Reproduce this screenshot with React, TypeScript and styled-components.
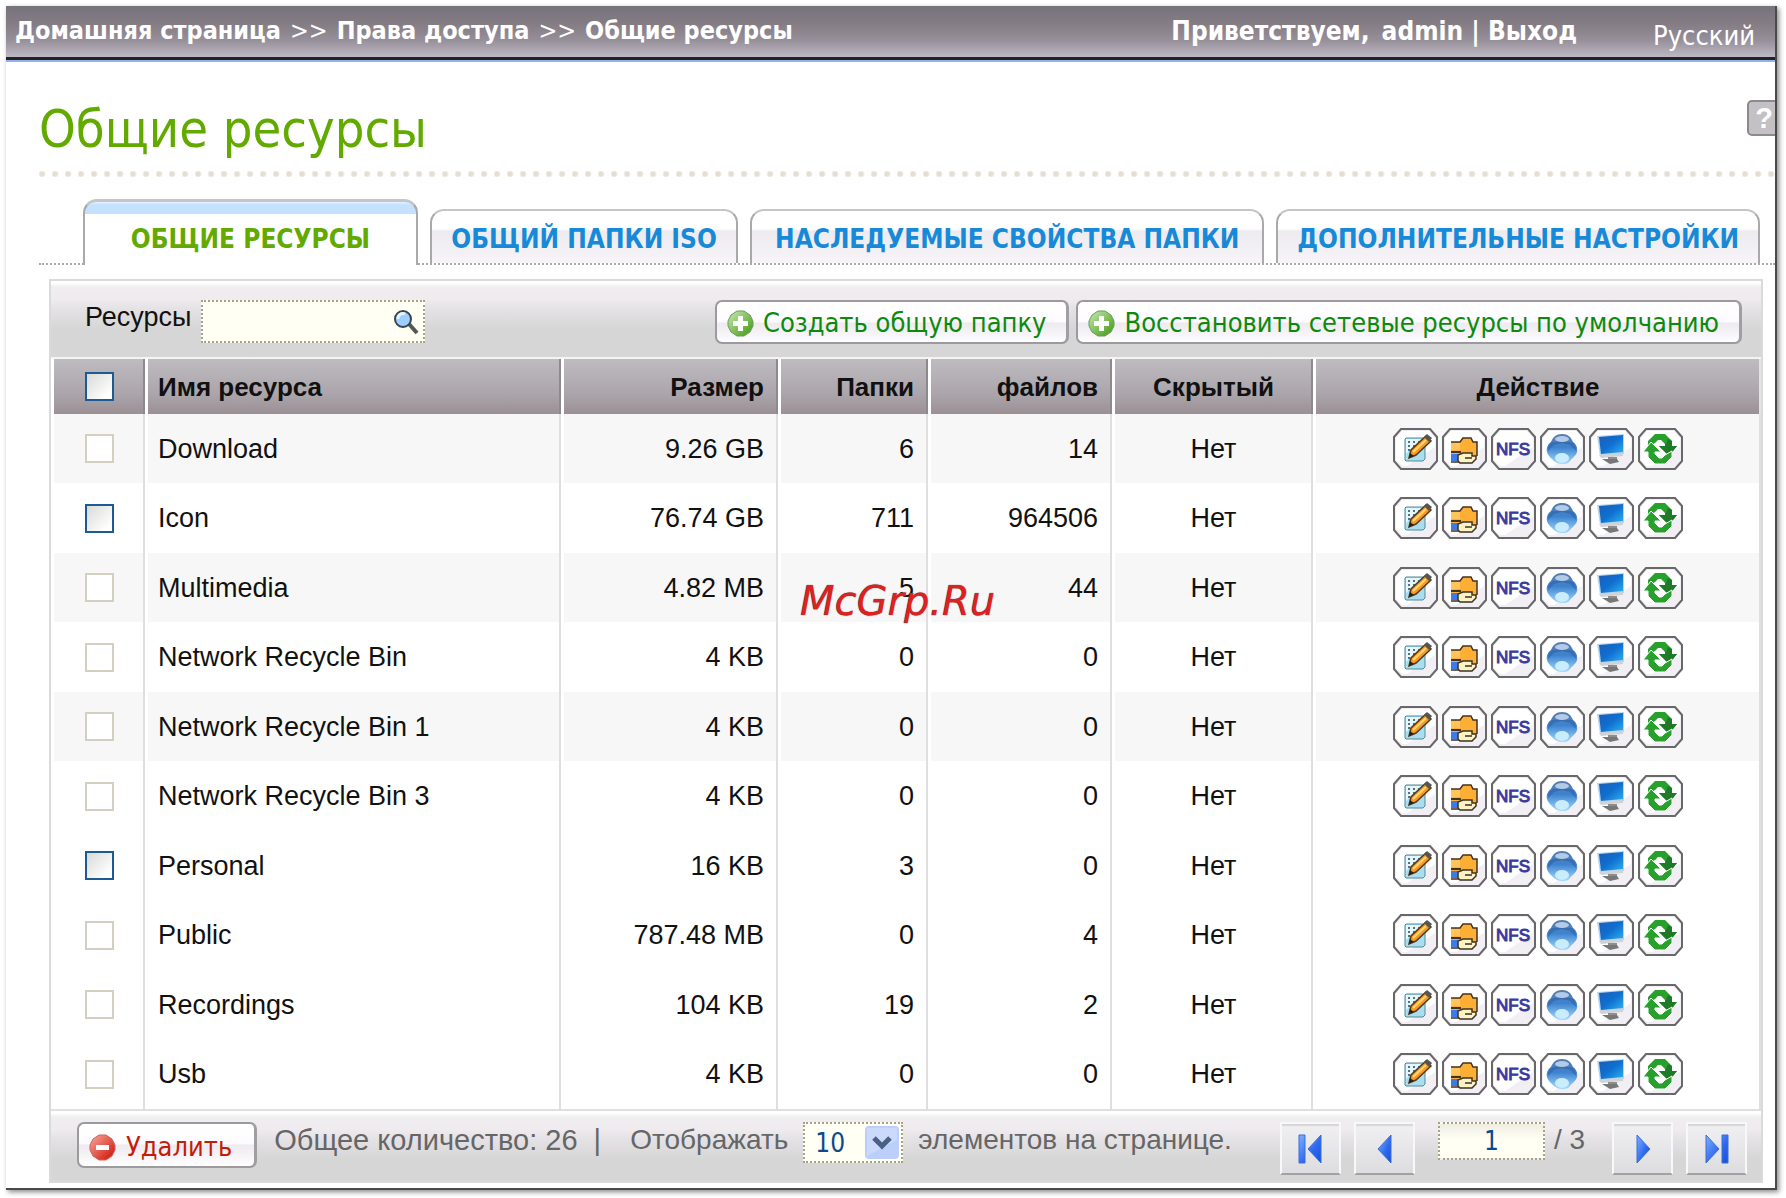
import React, { useState } from "react";
import styled, { createGlobalStyle } from "styled-components";

const ui = `"DejaVu Sans Condensed", "DejaVu Sans", sans-serif`;
const body = `"Liberation Sans", Arial, sans-serif`;

const GlobalStyle = createGlobalStyle`
  *, *::before, *::after { box-sizing: border-box; }
  body { margin: 0; background: #fff; font-family: ${body}; color: #111; }
  button, input, select { font: inherit; margin: 0; }
`;

const Page = styled.div`
  padding: 6px 9px 10px 6px;
`;

const Frame = styled.div`
  position: relative;
  overflow: hidden;
  padding-bottom: 5px;
  border-right: 2px solid #4a4a4a;
  border-bottom: 2px solid #4a4a4a;
`;

const FrameShadow = styled.div`
  box-shadow: 2px 2px 5px #888;
`;

const TopBar = styled.header`
  display: flex;
  align-items: flex-start;
  height: 56px;
  padding: 10px 20px 0 9px;
  border-bottom: 2px solid #93b2ea;
  background: linear-gradient(#77737b 0, #857c84 18px, #968f99 34px, #bdb8c3 51px, #222 51px, #222 54px);
  font: 700 25px/30px ${ui};
  color: #fff;
`;

const Crumbs = styled.nav`
  display: flex;
  gap: 9px;
  margin-right: auto;
  white-space: nowrap;
`;

const BarLink = styled.a`
  color: #fff;
  text-decoration: none;
`;

const Separator = styled.span`
  font-weight: 400;
`;

const Greeting = styled.div`
  display: flex;
  gap: 12px;
  font-size: 26px;
  white-space: pre;
`;

const Language = styled(BarLink)`
  margin-left: 76px;
  padding-top: 5px;
  font-size: 27px;
  font-weight: 400;
`;

const TitleRow = styled.div`
  display: flex;
  align-items: flex-start;
  justify-content: space-between;
  padding: 37px 0 12px 33px;
`;

const Title = styled.h1`
  margin: 0;
  font: 400 52px/60px ${ui};
  color: #62a900;
`;

const Help = styled.button`
  width: 38px;
  height: 36px;
  margin: 1px -10px 0 0;
  padding: 0 4px 0 0;
  border: 2px solid #8d8a8e;
  border-radius: 5px;
  background: #c3c1c4;
  font: 700 29px/30px ${body};
  color: #fff;
`;

const Dots = styled.div`
  height: 6px;
  margin-left: 33px;
  background: radial-gradient(circle at 3px 3px, #e5dfd3 2px, transparent 4px) 0 0 / 13px 6px repeat-x;
`;

const Tabs = styled.nav`
  display: flex;
  align-items: flex-end;
  gap: 12px;
  height: 66px;
  margin: 22px 0 14px 33px;
  padding: 0 15px 0 44px;
  border-bottom: 2px dotted #aaa;
`;

const Tab = styled.a<{ $active?: boolean; $grow: number }>`
  flex: ${(p) => p.$grow} 1 0;
  height: ${(p) => (p.$active ? 66 : 54)}px;
  margin-bottom: ${(p) => (p.$active ? -2 : 0)}px;
  padding-top: ${(p) => (p.$active ? 21 : 12)}px;
  border: 2px solid #a9a9ab;
  border-top: ${(p) => (p.$active ? 3 : 2)}px solid #c3c7c8;
  border-bottom: 0;
  border-radius: 14px 14px 0 0;
  background: ${(p) =>
    p.$active
      ? "linear-gradient(#e4f2ff 0, #c4e1ff 3px, #c4e1ff 12px, #fff 12px)"
      : "linear-gradient(#fff 0, #fff 18px, #eeebf0 20px, #f6f4f7)"};
  font: 700 26px/32px ${ui};
  color: ${(p) => (p.$active ? "#62a900" : "#168ad8")};
  text-align: center;
  text-decoration: none;
  white-space: nowrap;
`;

const Panel = styled.section`
  margin: 0 12px 0 43px;
  border: 2px solid #dadada;
`;

const panelShade = `linear-gradient(#fff 0, #fff 2px, #efeef0 6px, #efebef 18px, #e5e2e6 28px, #d6d6d6 48px)`;

const Toolbar = styled.div`
  display: flex;
  align-items: flex-start;
  gap: 7px;
  height: 76px;
  padding: 19px 19px 0 34px;
  background: ${panelShade};
`;

const SearchLabel = styled.label`
  padding-top: 1px;
  font-size: 27px;
  line-height: 32px;
`;

const SearchBox = styled.div`
  display: flex;
  align-items: center;
  width: 224px;
  height: 43px;
  margin: 0 auto 0 3px;
  padding-right: 4px;
  border: 2px dotted #a5a28c;
  background: #fffff3;
`;

const SearchInput = styled.input`
  flex: 1;
  min-width: 0;
  height: 100%;
  padding: 0 6px;
  border: 0;
  outline: 0;
  background: transparent;
  font-size: 26px;
`;

const IconButton = styled.button`
  display: block;
  padding: 0;
  border: 0;
  background: transparent;
  line-height: 0;
`;

const PushButton = styled.button<{ $danger?: boolean }>`
  display: flex;
  align-items: center;
  gap: ${(p) => (p.$danger ? 10 : 9)}px;
  height: ${(p) => (p.$danger ? 46 : 44)}px;
  padding: ${(p) => (p.$danger ? "4px 22px 0 10px" : "2px 20px 0 10px")};
  border: 2px solid #9c999f;
  border-right: 3px solid #a09da3;
  border-radius: 7px;
  background: linear-gradient(#fff 0, #fdfbff 20px, #eeeaef 21px, #f8f6f9 34px, #fff);
  font: 400 27px/34px ${ui};
  color: ${(p) => (p.$danger ? "#c31d08" : "#0c8a0c")};
  white-space: nowrap;
`;

const Table = styled.table`
  width: 100%;
  table-layout: fixed;
  border-collapse: separate;
  border-spacing: 0;
  border-top: 2px solid #f4f4f4;
`;

const Col = styled.col<{ $w?: number }>`
  width: ${(p) => (p.$w ? `${p.$w}px` : "auto")};
`;

type Align = "left" | "right" | "center";

const Th = styled.th<{ $align: Align }>`
  height: 55px;
  padding: 0 12px 0 ${(p) => (p.$align === "center" ? 13 : 10)}px;
  border-left: 3px solid #fff;
  border-right: 2px solid #8d8a8d;
  background: linear-gradient(#bebcc0 0, #b5b1b6 16px, #aca6ac 34px, #9b9094) padding-box;
  font-size: 26px;
  line-height: 32px;
  font-weight: 700;
  text-align: ${(p) => p.$align};
  &:last-child { border-right-color: #e4e4e4; }
`;

const Td = styled.td<{ $align: Align }>`
  height: 69px;
  padding: 0 12px 0 ${(p) => (p.$align === "center" ? 13 : 10)}px;
  border-left: 3px solid #fff;
  border-right: 2px solid #dfdfdf;
  background-clip: padding-box;
  font-size: 27px;
  line-height: 32px;
  text-align: ${(p) => p.$align};
`;

const Row = styled.tr<{ $shaded: boolean }>`
  background: #fff;
  ${Td} { background-color: ${(p) => (p.$shaded ? "#f7f7f7" : "#fff")}; }
  &:nth-child(even) ${Td} { height: 70px; }
`;

const Check = styled.input`
  appearance: none;
  display: block;
  width: 29px;
  height: 29px;
  margin: 0 auto;
  border: 2px solid #1c5a94;
  background: linear-gradient(135deg, #d9d9d6, #fff 85%);
  &:checked { background: #1c5a94; }
  &:disabled { border-color: #d3d0c2; background: #fff; }
`;

const Actions = styled.div`
  display: flex;
  justify-content: center;
  gap: 4px;
`;

const Footer = styled.div`
  display: flex;
  align-items: flex-start;
  height: 72px;
  padding: 11px 14px 0 26px;
  border-top: 2px solid #e0dfe1;
  background: ${panelShade};
  font-size: 28px;
  line-height: 36px;
  color: #666;
  white-space: pre;
`;

const Total = styled.span`
  margin: 0 29px 0 17px;
  font-size: 29px;
`;

const PageSize = styled.label`
  display: flex;
  gap: 15px;
`;

const SelectBox = styled.span`
  position: relative;
  display: block;
`;

const Select = styled.select`
  appearance: none;
  display: block;
  width: 100px;
  height: 41px;
  padding: 0 10px;
  border: 2px dotted #a5a28c;
  border-radius: 0;
  background: #fffff3;
  font: 400 26px/32px ${ui};
  color: #0b4a8c;
`;

const SelectArrow = styled.svg`
  position: absolute;
  top: 4px;
  right: 4px;
  pointer-events: none;
`;

const Pager = styled.div`
  display: flex;
  gap: 13px;
  margin-left: auto;
`;

const PageButton = styled.button`
  display: grid;
  place-items: center;
  width: 61px;
  height: 53px;
  padding: 0;
  border: 2px solid #f8f8f8;
  border-bottom-color: #a3a1a4;
  background: linear-gradient(#d6d4d7 0, #d6d4d7 1px, #efeef1 3px, #dddcde);
`;

const PageInput = styled.input`
  width: 107px;
  height: 38px;
  margin: 0 -4px 0 10px;
  padding: 0;
  border: 2px dotted #a5a28c;
  background: linear-gradient(#eeeee2, #fffff3 16px);
  font: 400 26px/32px ${ui};
  color: #0b4a8c;
  text-align: center;
`;

const PageCount = styled.span`
  width: 45px;
`;

const Watermark = styled.div`
  position: absolute;
  left: 794px;
  top: 570px;
  font: italic 400 40px/50px "DejaVu Sans", sans-serif;
  color: #e02020;
  text-shadow: 0 0 1px #333;
  pointer-events: none;
`;

const Magnifier = () => (
  <svg width="26" height="26" viewBox="0 0 26 26" aria-hidden="true">
    <path d="M16 15 24 24" stroke="#555" strokeWidth="4" />
    <circle cx="10" cy="10" r="8" fill="#9ccfff" stroke="#39444c" strokeWidth="2" />
    <path d="M5 10a5 5 0 0 1 7-5" stroke="#e3f4ff" strokeWidth="3" fill="none" />
  </svg>
);

const Badge = ({ danger }: { danger?: boolean }) => {
  const id = danger ? "badge-red" : "badge-green";
  return (
    <svg width="27" height="27" viewBox="0 0 27 27" aria-hidden="true">
      <defs>
        <linearGradient id={id} x2="1" y2="1">
          <stop offset="0.1" stopColor={danger ? "#f59a8e" : "#b9e3a0"} />
          <stop offset="0.8" stopColor={danger ? "#d92a1e" : "#5aa82f"} />
        </linearGradient>
      </defs>
      <path d="M10 1h7l6 4 3 6v5l-3 6-6 4h-7l-6-4-3-6v-5l3-6z" fill={`url(#${id})`} stroke={danger ? "#c9665c" : "#6f9b5c"} />
      <path d={danger ? "M7 11h13v5H7z" : "M11 6h5v5h5v5h-5v5h-5v-5H6v-5h5z"} fill="#fff" />
    </svg>
  );
};

type Kind = "edit" | "folder" | "nfs" | "web" | "host" | "refresh";

const glyphs: Record<Kind, React.ReactNode> = {
  edit: (
    <>
      <path d="M13 10h19v21l-2 2H13l-1-1V11z" fill="#a9def1" stroke="#51899c" />
      <path d="M13 11h15l-15 15z" fill="#e6f6fb" />
      <path d="M15 14h2m3 0h2m3 0h2M15 18h2m3 0h2M15 22h2" stroke="#4e7484" strokeWidth="2" />
      <path d="m16 30 2-8L33 8l5 5-15 14z" fill="#f89b1f" stroke="#5b3a16" strokeWidth="1.5" />
      <path d="M20 24 33 12" stroke="#ffd779" strokeWidth="2" />
      <path d="m31 9 3-3 5 4-3 4z" fill="#555" />
      <path d="m16 30 1-5 4 3z" fill="#222" />
    </>
  ),
  folder: (
    <>
      <path d="M9 14h9l3-4h8l2 4h4v14l-5 4H9z" fill="#fdae35" />
      <path d="M9 14h9l3-4h8l2 4h4v14" fill="none" stroke="#453220" strokeWidth="1.5" />
      <path d="M9 15h9v7H9z" fill="#ffc55a" />
      <path d="M9 24h10" stroke="#453220" strokeWidth="2" />
      <path d="M9 26h7v7H9z" fill="#3d7ce6" />
      <path d="M16 27l5-2h9v3h4v3l-4 4H18l-2-2z" fill="#fff3c4" stroke="#3b3325" strokeWidth="1.5" />
      <path d="M23 30h7M9 34h8" stroke="#3b3325" strokeWidth="1.5" />
    </>
  ),
  nfs: (
    <text x="22" y="27" textAnchor="middle" fontFamily={'"Liberation Sans", sans-serif'} fontSize="17" fontWeight="400" fill="#3d3a9e" stroke="#3d3a9e">
      NFS
    </text>
  ),
  web: (
    <>
      <defs>
        <linearGradient id="globe" x2="0" y2="1">
          <stop offset="0" stopColor="#5a7ba8" />
          <stop offset="0.45" stopColor="#3d83cf" />
          <stop offset="1" stopColor="#a6dcfd" />
        </linearGradient>
      </defs>
      <path d="M22 6c6 0 9 3 11 8 3 2 5 6 4 10s-5 6-7 9-5 3-8 3-6-1-8-3-6-5-7-9 1-8 4-10c2-5 5-8 11-8z" fill="url(#globe)" />
      <path d="M12 14c-3 2-4 5-4 9l6-6 8-2 8 2 6 6c0-4-1-7-4-9z" fill="#2f62a6" opacity="0.6" />
      <ellipse cx="22" cy="11" rx="7" ry="3" fill="#b3cbe6" />
      <ellipse cx="22" cy="30" rx="7" ry="5" fill="#c9ecff" />
    </>
  ),
  host: (
    <>
      <defs>
        <linearGradient id="screen" x2="1" y2="1">
          <stop offset="0" stopColor="#1c5db8" />
          <stop offset="0.5" stopColor="#0f6fd0" />
          <stop offset="1" stopColor="#2eb0ee" />
        </linearGradient>
      </defs>
      <path d="m8 8 27-2v20l-24 2z" fill="#b9d3ea" />
      <path d="m10 9 24-2v17l-22 2z" fill="url(#screen)" />
      <path d="m10 27 24-2v3l-22 2z" fill="#cfd2d6" />
      <path d="M19 29h9v3h-9z" fill="#8d8d8d" />
      <path d="M13 31h15l2 3-9 2z" fill="#777" />
    </>
  ),
  refresh: (
    <>
      <path d="M10 19v-6l7-7h10l7 7v5h5l-8 10-10-10h6v-2l-4-4h-3l-3 3z" fill="#27a02c" />
      <path d="M30 11l4 2v5h5l-8 10-10-10h6z" fill="#1f7a28" />
      <path d="M10 19v-6l7-7h10l7 7v5h5l-8 10-10-10h6v-2l-4-4h-3l-3 3z" fill="#27a02c" stroke="#fff" transform="rotate(180 22 21)" />
    </>
  ),
};

const actions: [Kind, string][] = [
  ["edit", "Изменить"],
  ["folder", "Права доступа"],
  ["nfs", "NFS"],
  ["web", "WebDAV"],
  ["host", "Хост"],
  ["refresh", "Обновить"],
];

const ActionIcon = ({ kind }: { kind: Kind }) => (
  <svg width="45" height="42" viewBox="0 0 45 42" aria-hidden="true">
    <path d="M8 1h29l7 8v24l-7 8H8l-7-8V9z" fill="#f1eff3" stroke="#69676a" strokeWidth="2" />
    <path d="M9 3h27l6 7v9L14 38H9l-6-6V10z" fill="#fff" />
    {glyphs[kind]}
  </svg>
);

const pagerShapes = {
  first: "M4 2h6v28H4zM26 2v28L13 16z",
  prev: "M22 2v28L9 16z",
  next: "M10 2v28l13-14z",
  last: "M5 2v28l13-14zM21 2h6v28h-6z",
};

const PagerIcon = ({ kind }: { kind: keyof typeof pagerShapes }) => (
  <svg width="32" height="32" viewBox="0 0 32 32" aria-hidden="true">
    <defs>
      <linearGradient id={`pg-${kind}`} x2="1" y2="1">
        <stop offset="0" stopColor="#7fb0ff" />
        <stop offset="0.6" stopColor="#2c68ee" />
        <stop offset="1" stopColor="#1b4fd8" />
      </linearGradient>
    </defs>
    <path d={pagerShapes[kind]} fill={`url(#pg-${kind})`} stroke="#3a6fd8" />
  </svg>
);

type Share = { name: string; size: string; folders: number; files: number; removable?: boolean; shaded?: boolean };

const shares: Share[] = [
  { name: "Download", size: "9.26 GB", folders: 6, files: 14, shaded: true },
  { name: "Icon", size: "76.74 GB", folders: 711, files: 964506, removable: true },
  { name: "Multimedia", size: "4.82 MB", folders: 5, files: 44, shaded: true },
  { name: "Network Recycle Bin", size: "4 KB", folders: 0, files: 0 },
  { name: "Network Recycle Bin 1", size: "4 KB", folders: 0, files: 0, shaded: true },
  { name: "Network Recycle Bin 3", size: "4 KB", folders: 0, files: 0 },
  { name: "Personal", size: "16 KB", folders: 3, files: 0, removable: true },
  { name: "Public", size: "787.48 MB", folders: 0, files: 4 },
  { name: "Recordings", size: "104 KB", folders: 19, files: 2 },
  { name: "Usb", size: "4 KB", folders: 0, files: 0 },
];

const tabs = [
  { text: "ОБЩИЕ РЕСУРСЫ", grow: 334 },
  { text: "ОБЩИЙ ПАПКИ ISO", grow: 307 },
  { text: "НАСЛЕДУЕМЫЕ СВОЙСТВА ПАПКИ", grow: 515 },
  { text: "ДОПОЛНИТЕЛЬНЫЕ НАСТРОЙКИ", grow: 484 },
];

export default function App() {
  const [page, setPage] = useState("1");
  return (
    <Page>
      <GlobalStyle />
      <FrameShadow>
        <Frame>
          <TopBar>
            <Crumbs>
              <BarLink href="#">Домашняя страница</BarLink>
              <Separator>&gt;&gt;</Separator>
              <BarLink href="#">Права доступа</BarLink>
              <Separator>&gt;&gt;</Separator>
              <span>Общие ресурсы</span>
            </Crumbs>
            <Greeting>
              <span>Приветствуем,</span>
              <span>
                admin | <BarLink href="#">Выход</BarLink>
              </span>
            </Greeting>
            <Language href="#">Русский</Language>
          </TopBar>

          <TitleRow>
            <Title>Общие ресурсы</Title>
            <Help>?</Help>
          </TitleRow>
          <Dots />

          <Tabs>
            {tabs.map((t, i) => (
              <Tab key={t.text} href="#" $active={i === 0} $grow={t.grow}>
                {t.text}
              </Tab>
            ))}
          </Tabs>

          <Panel>
            <Toolbar>
              <SearchLabel htmlFor="search">Ресурсы</SearchLabel>
              <SearchBox>
                <SearchInput id="search" />
                <IconButton aria-label="Поиск">
                  <Magnifier />
                </IconButton>
              </SearchBox>
              <PushButton>
                <Badge />
                Создать общую папку
              </PushButton>
              <PushButton>
                <Badge />
                Восстановить сетевые ресурсы по умолчанию
              </PushButton>
            </Toolbar>

            <Table>
              <colgroup>
                <Col $w={94} />
                <Col />
                <Col $w={217} />
                <Col $w={150} />
                <Col $w={184} />
                <Col $w={201} />
                <Col $w={448} />
              </colgroup>
              <thead>
                <tr>
                  <Th $align="center">
                    <Check type="checkbox" aria-label="Выбрать все" />
                  </Th>
                  <Th $align="left">Имя ресурса</Th>
                  <Th $align="right">Размер</Th>
                  <Th $align="right">Папки</Th>
                  <Th $align="right">файлов</Th>
                  <Th $align="center">Скрытый</Th>
                  <Th $align="center">Действие</Th>
                </tr>
              </thead>
              <tbody>
                {shares.map((s) => (
                  <Row key={s.name} $shaded={!!s.shaded}>
                    <Td $align="center">
                      <Check type="checkbox" aria-label={s.name} disabled={!s.removable} />
                    </Td>
                    <Td $align="left">{s.name}</Td>
                    <Td $align="right">{s.size}</Td>
                    <Td $align="right">{s.folders}</Td>
                    <Td $align="right">{s.files}</Td>
                    <Td $align="center">Нет</Td>
                    <Td $align="center">
                      <Actions>
                        {actions.map(([kind, label]) => (
                          <IconButton key={kind} aria-label={label}>
                            <ActionIcon kind={kind} />
                          </IconButton>
                        ))}
                      </Actions>
                    </Td>
                  </Row>
                ))}
              </tbody>
            </Table>

            <Footer>
              <PushButton $danger>
                <Badge danger />
                Удалить
              </PushButton>
              <Total>Общее количество: 26  |</Total>
              <PageSize>
                Отображать
                <SelectBox>
                  <Select defaultValue="10">
                    <option>10</option>
                    <option>20</option>
                    <option>50</option>
                  </Select>
                  <SelectArrow width="34" height="33" viewBox="0 0 34 33" aria-hidden="true">
                    <rect width="34" height="33" rx="4" fill="#bccffb" />
                    <path d="M2 2h30v12L2 30z" fill="#cbd9fd" />
                    <path d="m9 12 8 8 8-8" fill="none" stroke="#4a6084" strokeWidth="5" />
                  </SelectArrow>
                </SelectBox>
                элементов на странице.
              </PageSize>
              <Pager>
                <PageButton aria-label="Первая">
                  <PagerIcon kind="first" />
                </PageButton>
                <PageButton aria-label="Назад">
                  <PagerIcon kind="prev" />
                </PageButton>
                <PageInput aria-label="Страница" value={page} onChange={(e) => setPage(e.target.value)} />
                <PageCount>/ 3</PageCount>
                <PageButton aria-label="Вперёд">
                  <PagerIcon kind="next" />
                </PageButton>
                <PageButton aria-label="Последняя">
                  <PagerIcon kind="last" />
                </PageButton>
              </Pager>
            </Footer>
          </Panel>
          <Watermark>McGrp.Ru</Watermark>
        </Frame>
      </FrameShadow>
    </Page>
  );
}
